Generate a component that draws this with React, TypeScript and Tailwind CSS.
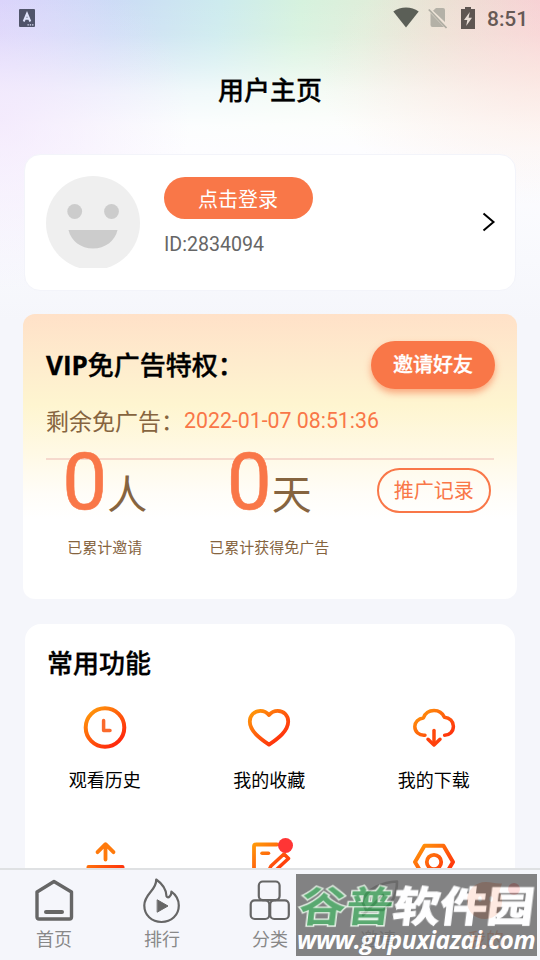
import React from "react";

const Gradient = ({ id }: { id: string }) => (
  <defs>
    <linearGradient id={id} gradientUnits="userSpaceOnUse" x1="6" y1="4" x2="34" y2="38">
      <stop offset="0" stopColor="#ff9a0a" />
      <stop offset="0.55" stopColor="#ff5a0c" />
      <stop offset="1" stopColor="#ff2a0c" />
    </linearGradient>
  </defs>
);

const icon = (id: string, children: React.ReactNode) => (
  <svg
    className="h-11 w-11"
    viewBox="0 0 44 44"
    fill="none"
    stroke={`url(#${id})`}
    strokeWidth="3.5"
    strokeLinecap="round"
    strokeLinejoin="round"
  >
    <Gradient id={id} />
    {children}
  </svg>
);

const features = [
  {
    label: "观看历史",
    icon: icon(
      "history",
      <>
        <circle cx="22" cy="22.5" r="19.3" strokeWidth="4" />
        <path d="M20.6 15.5V25.4H27" stroke="#fa6a2c" />
      </>
    ),
  },
  {
    label: "我的收藏",
    icon: icon(
      "favorite",
      <path
        strokeWidth="3.8"
        d="M22 10C19.5 7 16.5 5.9 13.3 5.9C7 5.9 2.8 10.8 2.8 16.5C2.8 26 13 33.5 22 39.6C31 33.5 41.2 26 41.2 16.5C41.2 10.8 37 5.9 30.7 5.9C27.5 5.9 24.5 7 22 10Z"
      />
    ),
  },
  {
    label: "我的下载",
    icon: icon(
      "download",
      <>
        <path d="M13 30.2C7 30.7 2.8 26.8 2.8 21.6C2.8 17 6.5 13.4 11.4 13C13 8.7 17 5.6 22 5.6C27 5.6 30.6 8.3 32.4 12.2C37.6 12.6 41.4 16.4 41.4 21.2C41.4 26.5 37.5 30.2 32.6 30.2" />
        <path d="M22 25.5V39" stroke="#ff480c" />
        <path d="M16 34.3L22 40L28 34.3" stroke="#ff400c" />
      </>
    ),
  },
  {
    label: "上传视频",
    icon: icon(
      "upload",
      <>
        <path d="M22.5 19.5V5M14.5 12.2L22.5 4.2L30.5 12.2" strokeWidth="3.8" stroke="#ff7a0c" />
        <path d="M5.5 40V27H39.5V40Z" strokeWidth="4" />
      </>
    ),
  },
  {
    label: "意见反馈",
    badge: true,
    icon: icon(
      "feedback",
      <>
        <path d="M30 4.5H9Q7 4.5 7 6.5V38H38V34" strokeWidth="3.8" />
        <path d="M15 13.2H21.5" />
        <path d="M22 30L24 26L37 14L41.5 18.5L29 30Z" />
      </>
    ),
  },
  {
    label: "设置",
    icon: icon(
      "setting",
      <>
        <path d="M12.5 5.8H31.5L41 22L31.5 38H12.5L3 22Z" strokeWidth="4" />
        <circle cx="22" cy="22" r="7.2" strokeWidth="3.8" />
      </>
    ),
  },
];

const tabs = [
  {
    label: "首页",
    icon: (
      <>
        <path d="M22 5.5L39.5 16V41Q39.5 43 37.5 43H7Q5 43 5 41V16Z" />
        <path d="M14 36H30" strokeWidth="4" />
      </>
    ),
  },
  {
    label: "排行",
    icon: (
      <>
        <path
          strokeWidth="2.2"
          d="M16.2 3.5C22 7.5 26.3 14 26.5 20.2Q27.8 22.6 29.8 20.2Q31.5 18.5 31.4 15.7C36 19 38.8 24 38.8 29.5C38.8 39 31.5 46 21.5 46C11.5 46 4.3 39 4.3 29.5C4.3 17.5 16.8 14.5 16.2 3.5Z"
        />
        <path d="M17.5 24L28 30L17.5 36Z" fill="#666" strokeWidth="1" />
      </>
    ),
  },
  {
    label: "分类",
    icon: (
      <>
        <rect x="10.8" y="5.5" width="20.8" height="18.6" rx="4" strokeWidth="2.2" />
        <rect x="2.7" y="24.4" width="18.6" height="18.6" rx="4" strokeWidth="2.2" />
        <rect x="22.2" y="24.4" width="18.6" height="18.6" rx="4" strokeWidth="2.2" />
      </>
    ),
  },
  {
    label: "邀请",
    icon: (
      <path
        strokeWidth="2.6"
        d="M41 5.5C28 6 10 12 6.5 26L10 34H27C36 28 41 18 41 5.5ZM7 39L27 19"
      />
    ),
  },
  {
    label: "我的",
    active: true,
    icon: (
      <>
        <path
          fill="#f97545"
          stroke="none"
          d="M38 7.5L35.5 15C42 27 36 43 21 43C10 43 3 35 3 25C3 14 11 6 22 6C28 6 31 8 38 7.5Z"
        />
        <path d="M16 22V24M27 22V24" stroke="#fff" />
        <circle cx="50" cy="13" r="6" fill="#ff3535" stroke="none" />
      </>
    ),
  },
];

const StatusBar = () => {
  return (
    <div className="flex h-9 items-center justify-between pr-3 pl-[19px]">
      <svg className="h-[18px] w-4" viewBox="0 0 16 18">
        <rect width="16" height="18" rx="1" fill="#50546a" />
        <path d="M4.7 12.5L8 4.5L11.3 12.5M6 9.8H10" fill="none" stroke="#dfe3fb" strokeWidth="2" />
        <path d="M8.5 15.8H15" stroke="#dfe3fb" strokeWidth="1.3" strokeDasharray="1.3 1" />
      </svg>
      <div className="flex items-center">
        <svg className="h-[22px] w-[26px]" viewBox="0 0 26 22">
          <path d="M13 20.5L0.3 4.5C7.5-.8 18.5-.8 25.7 4.5Z" fill="#5b5f57" />
        </svg>
        <svg className="ml-[9px] h-[22px] w-5" viewBox="0 0 20 22">
          <path d="M8 1H15Q17 1 17 3V15L5 3.8ZM2.5 6L16 20H4.5Q2.5 20 2.5 18Z" fill="#b4b1a7" />
          <path d="M.8 2.5L18.5 21" stroke="#aeaca2" strokeWidth="1.8" />
        </svg>
        <svg className="ml-[13px] h-[22px] w-[14px]" viewBox="0 0 14 22">
          <path d="M4 0H10V2H14V22H0V2H4Z" fill="#5e5652" />
          <path d="M8.8 5L3 13H6.3L5.2 19L11 10.8H7.6Z" fill="#e8ddd6" />
        </svg>
        <span className="ml-3 pt-0.5 font-[Roboto] text-[21px] leading-none font-medium tracking-[-0.1px] text-[#665955]">8:51</span>
      </div>
    </div>
  );
};

const ProfileCard = () => {
  return (
    <div className="mx-6 mt-[37px] flex h-[137px] items-start rounded-2xl border border-[#f3f4fa] bg-white pt-[21px] pr-[19px] pl-[21px]">
      <svg className="h-[92px] w-[94px]" viewBox="0 0 94 92">
        <circle cx="47" cy="47" r="47" fill="#efefef" />
        <circle cx="28.7" cy="35.5" r="7.4" fill="#ccc" />
        <circle cx="65.5" cy="35.5" r="7.4" fill="#ccc" />
        <path d="M22.5 54H71.5C69 65 59 72.5 47 72.5C35 72.5 25 65 22.5 54Z" fill="#ccc" />
      </svg>
      <div className="ml-6 pt-px">
        <button className="block h-[42px] w-[149px] rounded-full bg-[#f97748] pt-0.5 pr-px text-center text-xl leading-none text-white">
          点击登录
        </button>
        <p className="mt-4 font-[Roboto] text-[19.6px] leading-5 text-[#666]">ID:2834094</p>
      </div>
      <svg className="mt-9 ml-auto h-5 w-[14px]" viewBox="0 0 14 20">
        <path d="M1.5 1.5L11.5 10L1.5 18.5" fill="none" stroke="#000" strokeWidth="2" />
      </svg>
    </div>
  );
};

const Stat = ({ unit, label }: { unit: string; label: string }) => {
  return (
    <div className="flex flex-col items-center text-[#86643f]">
      <div className="flex h-[68px] items-baseline">
        <span className="font-[Roboto] text-[80px] leading-[45px] text-[#f97748] [-webkit-text-stroke:0.6px_#f97748]">0</span>
        <span className="text-[40px] leading-10">{unit}</span>
      </div>
      <span className="mt-[9px] text-[15px] leading-5">{label}</span>
    </div>
  );
};

const VipCard = () => {
  return (
    <div className="mx-[23px] mt-[23px] h-[285px] rounded-xl bg-[linear-gradient(180deg,#ffe1c8_0%,#feebcd_16%,#fef5d0_32%,#fff9e4_48%,#fffdf8_63%,#fff_72%)] pt-[27px]">
      <div className="flex items-center justify-between pr-[22px] pl-[23px]">
        <h2 className="pb-0.5 text-[26px] leading-8 font-medium text-black [-webkit-text-stroke:0.35px_#000]">
          <span className="font-['Open_Sans'] font-bold">VIP</span>免广告特权：
        </h2>
        <button className="h-12 w-[124px] rounded-full bg-[#f97748] pb-0.5 text-xl leading-none font-medium text-white shadow-[0_4px_7px_rgba(249,119,72,0.6)] [-webkit-text-stroke:0.3px_#fff]">
          邀请好友
        </button>
      </div>
      <div className="mt-4 flex items-center pl-[23px] leading-8">
        <span className="-mt-[3px] text-[23px] text-[#86643f]">剩余免广告：</span>
        <span className="font-[Roboto] text-[21.3px] text-[#f97748]">2022-01-07 08:51:36</span>
      </div>
      <div className="mx-[23px] mt-[21px] h-0.5 bg-[#f6d9cd]" />
      <div className="mr-px -ml-[0.5px] grid grid-cols-3">
        <Stat unit="人" label="已累计邀请" />
        <Stat unit="天" label="已累计获得免广告" />
        <div className="flex justify-center pt-2">
          <button className="h-[45px] w-[114px] rounded-full border-2 border-[#f97748] pb-0.5 text-xl leading-none text-[#f97748]">
            推广记录
          </button>
        </div>
      </div>
    </div>
  );
};

const FeatureCard = () => {
  return (
    <div className="mx-[25px] mt-[25px] h-[400px] rounded-2xl bg-white pt-[22px]">
      <h2 className="pl-[22px] text-[26px] leading-8 font-medium text-black [-webkit-text-stroke:0.35px_#000]">常用功能</h2>
      <div className="mt-[27px] mr-[-1px] ml-[-2.5px] grid grid-cols-3 gap-y-[48px]">
        {features.map((item) => (
          <div key={item.label} className="relative flex h-[87px] flex-col items-center text-black">
            {item.icon}
            {item.badge && (
              <span className="absolute top-[-2px] left-1/2 ml-[9px] h-[15px] w-[15px] rounded-full bg-[#ff3535]" />
            )}
            <span className="mt-[18px] text-lg leading-6">{item.label}</span>
          </div>
        ))}
      </div>
    </div>
  );
};

const TabBar = () => {
  return (
    <div className="relative grid h-[92px] shrink-0 grid-cols-5 border-t-2 border-[#dfe1e3] bg-[#f5f6fb] pt-[6px]">
      {tabs.map((tab) => (
        <div key={tab.label} className="flex flex-col items-center">
          <svg
            className="h-12 w-11 overflow-visible"
            viewBox="0 0 44 48"
            fill="none"
            stroke="#666"
            strokeWidth="3.4"
            strokeLinecap="round"
            strokeLinejoin="round"
          >
            {tab.icon}
          </svg>
          <span
            className={
              tab.active
                ? "mt-0.5 text-[18px] leading-6 text-[#f97545]"
                : "mt-0.5 text-[18px] leading-6 text-[#888]"
            }
          >
            {tab.label}
          </span>
        </div>
      ))}
      <div className="absolute top-1 left-[296px] h-[82px] w-[241px] bg-[#6c6c6c] whitespace-nowrap opacity-[0.84]">
        <div className="ml-1 flex h-[54px] origin-center scale-y-[0.86] -skew-x-6 pt-1.5 text-[47px] leading-[48px] font-bold">
          <span className="text-[#3b9a55] [-webkit-text-stroke:3px_#e4f2e4] [paint-order:stroke_fill]">谷普</span>
          <span className="text-white [-webkit-text-stroke:1.5px_#fff]">软件园</span>
        </div>
        <p className="-mt-0.5 pl-px font-['Open_Sans',sans-serif] text-[24.5px] leading-7 font-bold tracking-[-0.4px] text-white italic">
          www.gupuxiazai.com
        </p>
      </div>
    </div>
  );
};

const App = () => {
  return (
    <div className="flex h-[960px] w-[540px] flex-col overflow-hidden bg-[#f5f6fb] font-['Noto_Sans_CJK_SC',sans-serif]">
      <div className="min-h-0 flex-1 overflow-hidden bg-[radial-gradient(ellipse_190px_170px_at_0px_120px,rgba(241,228,252,0.7),rgba(241,228,252,0)),radial-gradient(ellipse_220px_130px_at_540px_75px,rgba(250,230,220,0.6),rgba(250,230,220,0)),linear-gradient(180deg,transparent_0px,rgba(255,255,255,0.1)_35px,rgba(255,255,255,0.4)_65px,rgba(255,255,255,0.72)_92px,rgba(255,255,255,0.93)_125px,#fdfdff_150px,#f8f9fd_260px,#f5f6fb_320px),linear-gradient(97deg,#d5d0fb_0px,#cbdbf6_110px,#cdebee_220px,#d6f2de_300px,#dfeeda_365px,#e9e0d3_440px,#f8c8d2_550px)]">
        <StatusBar />
        <h1 className="mt-[37px] pb-3 text-center text-[26px] leading-8 font-medium text-black [-webkit-text-stroke:0.3px_#000]">用户主页</h1>
        <ProfileCard />
        <VipCard />
        <FeatureCard />
      </div>
      <TabBar />
    </div>
  );
};

export default App;
